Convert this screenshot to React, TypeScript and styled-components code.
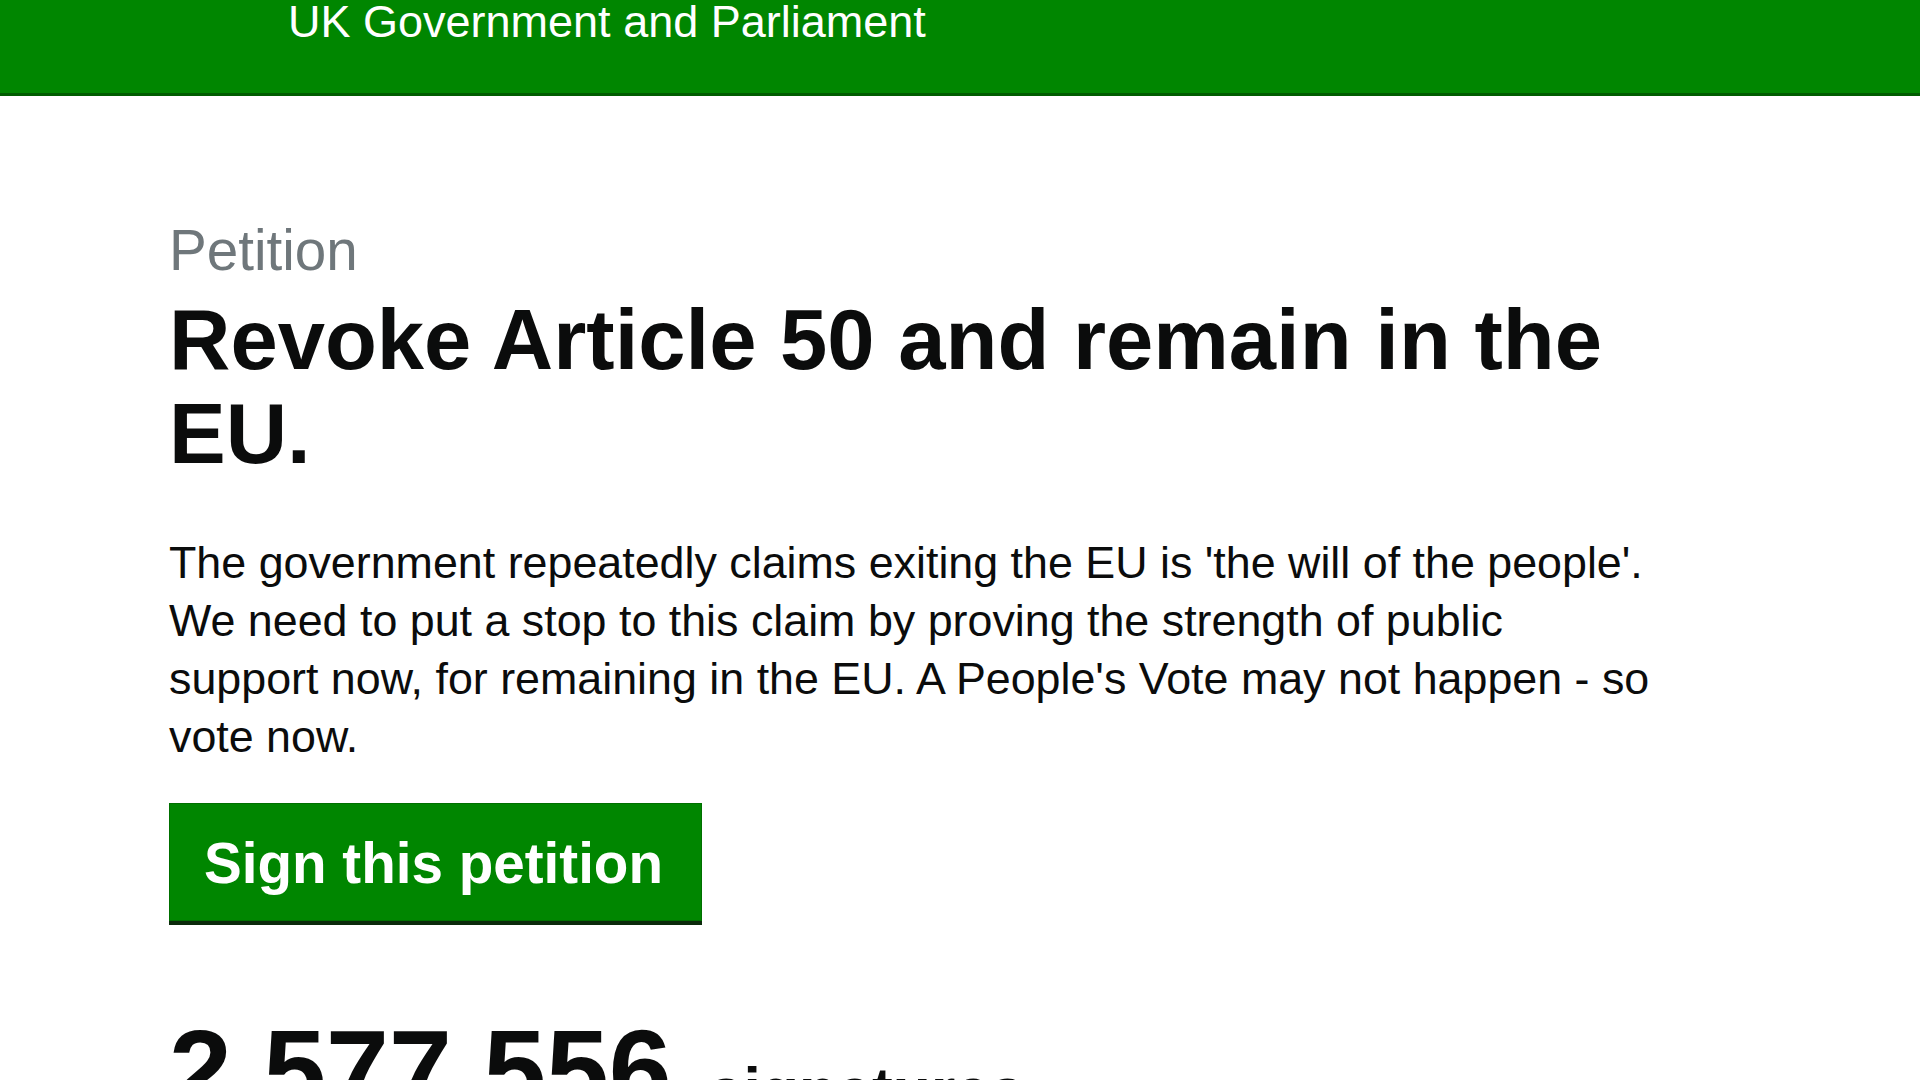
import styled, { createGlobalStyle } from "styled-components";

const GlobalStyle = createGlobalStyle`
    html, body {
        margin: 0;
        padding: 0;
        background: #ffffff;
    }
    body {
        font-family: "Liberation Sans", Arial, sans-serif;
        color: #0b0c0c;
    }
`;

const Page = styled.div`
    min-height: 1080px;
    overflow: hidden;
`;

const Header = styled.header`
    height: 94px;
    background-color: #008600;
    border-bottom: 3px solid #005c00;
    padding-left: 288px;
`;

const HeaderTitle = styled.div`
    color: #ffffff;
    font-size: 45px;
    line-height: 45px;
    margin-top: -1px;
`;

const Main = styled.main`
    padding: 0 0 0 169px;
    max-width: 1520px;
`;

const Caption = styled.span`
    display: block;
    margin-top: 122px;
    font-size: 56.6px;
    line-height: 66px;
    color: #6f777b;
`;

const Title = styled.h1`
    margin: 9px 0 0;
    font-size: 85px;
    line-height: 94.4px;
    font-weight: 700;
    color: #0b0c0c;
`;

const Description = styled.p`
    margin: 51px 0 0;
    font-size: 44.8px;
    line-height: 58px;
    color: #0b0c0c;
`;

const SignButton = styled.button`
    display: inline-block;
    margin-top: 38px;
    padding: 32px 38px 28px 34px;
    border: 1px solid #007000;
    background-color: #008600;
    color: #ffffff;
    font-family: inherit;
    font-size: 56.6px;
    font-weight: 700;
    line-height: 56.6px;
    box-shadow: 0 4px 0 #0b2a0b;
    cursor: pointer;
`;

const Count = styled.p`
    margin: 89px 0 0;
    font-size: 113px;
    line-height: 120px;
    font-weight: 700;
    white-space: nowrap;
`;

const CountLabel = styled.span`
    font-size: 62.5px;
    vertical-align: -3px;
    margin-left: 37px;
`;

function App() {
    return (
        <Page>
            <GlobalStyle />
            <Header>
                <HeaderTitle>UK Government and Parliament</HeaderTitle>
            </Header>
            <Main>
                <Caption>Petition</Caption>
                <Title>Revoke Article 50 and remain in the EU.</Title>
                <Description>
                    The government repeatedly claims exiting the EU is 'the will of the people'.
                    <br />
                    We need to put a stop to this claim by proving the strength of public
                    <br />
                    support now, for remaining in the EU. A People's Vote may not happen - so
                    <br />
                    vote now.
                </Description>
                <SignButton>Sign this petition</SignButton>
                <Count>
                    2,577,556<CountLabel>signatures</CountLabel>
                </Count>
            </Main>
        </Page>
    );
}

export default App;
